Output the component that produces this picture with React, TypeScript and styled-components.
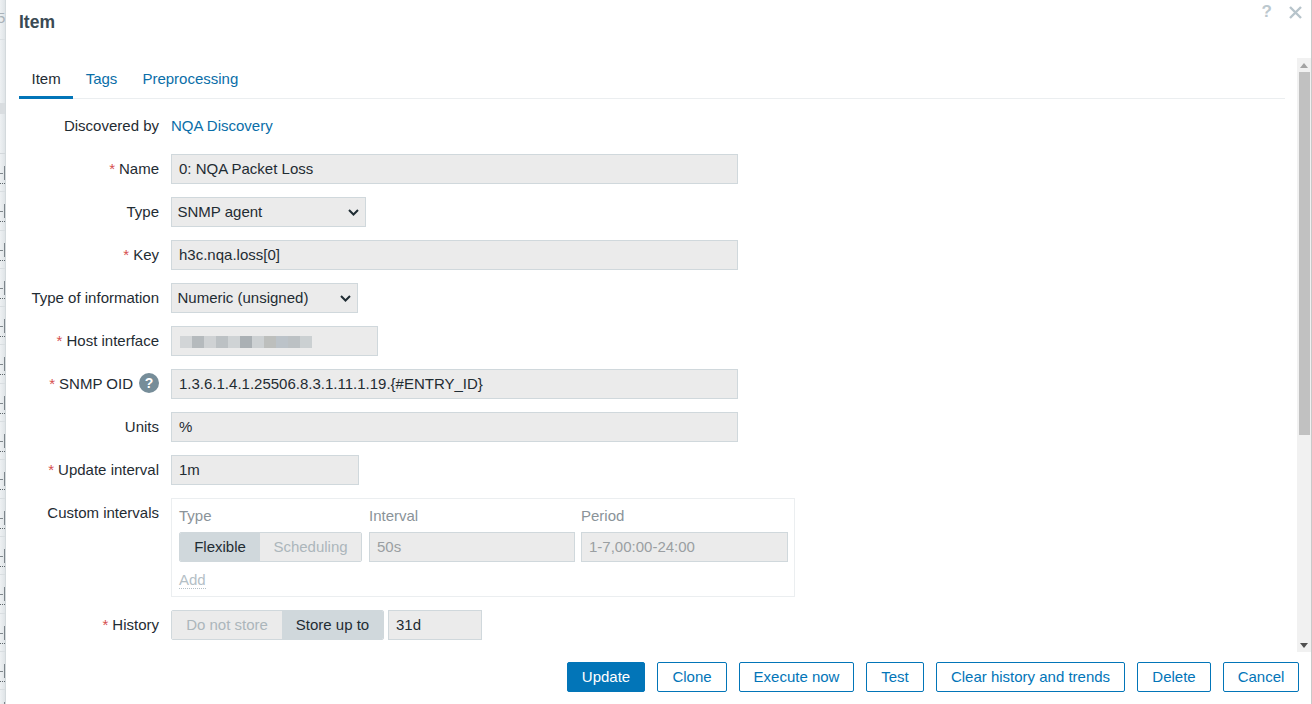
import React from "react";
import styled, { createGlobalStyle } from "styled-components";

const GlobalStyle = createGlobalStyle`
  html, body {
    margin: 0;
    padding: 0;
    height: 100%;
    overflow: hidden;
    background: #fff;
  }
  * { box-sizing: border-box; }
`;

const Page = styled.div`
  display: flex;
  width: 1312px;
  height: 704px;
  font-family: "Liberation Sans", Arial, sans-serif;
  font-size: 15px;
  color: #1f2c33;
  overflow: hidden;
`;

/* the hosts table that peeks out to the left of the dialog */
const Behind = styled.div`
  width: 6px;
  flex: none;
  display: flex;
  flex-direction: column;
  overflow: hidden;
  background: linear-gradient(to right, #eef1f3, #dfe4e7);
  border-right: 1px solid #d3d9dc;
`;

const BehindHead = styled.div`
  height: 40px;
  flex: none;
  padding-top: 9px;
  border-bottom: 1px solid #dbe0e3;
  color: #a9b2b8;
  line-height: 18px;
  text-indent: -3px;
`;

const BehindGap = styled.div`
  height: 63px;
  flex: none;
`;

const BehindBand = styled.div`
  height: 11px;
  flex: none;
  background: #d9dde0;
`;

const BehindRest = styled.div`
  height: 40px;
  flex: none;
  border-bottom: 1px solid #d3d8db;
`;

const BehindRow = styled.div`
  height: 38.3px;
  flex: none;
  position: relative;
  border-bottom: 1px solid #d9dee1;
`;

const RowDash = styled.span`
  position: absolute;
  left: 0;
  top: 19px;
  width: 3px;
  height: 1px;
  background: #7f878c;
`;

const RowBar = styled.span`
  position: absolute;
  left: 4px;
  top: 12px;
  width: 1px;
  height: 14px;
  background: #7d858b;
`;

const RowDots = styled.span`
  position: absolute;
  left: 0;
  right: 0;
  top: 29px;
  border-bottom: 1px dotted #5d666b;
`;

const Dialog = styled.div`
  flex: 1;
  min-width: 0;
  display: flex;
  flex-direction: column;
  background: #fff;
  border-right: 1px solid #c9c9c9;
`;

const Header = styled.div`
  height: 58px;
  flex: none;
  display: flex;
  justify-content: space-between;
  padding: 12px 9px 0 13px;
`;

const Title = styled.h4`
  margin: 0;
  font-size: 17.5px;
  line-height: 20px;
  font-weight: bold;
  color: #3a4a54;
`;

const HeaderIcons = styled.div`
  display: flex;
  gap: 17px;
  margin-top: -11px;
  height: 22px;
  align-items: center;
`;

const HelpMark = styled.span`
  font-size: 17px;
  font-weight: bold;
  color: #bcc8ce;
`;

const Body = styled.div`
  flex: 1;
  min-height: 0;
  display: flex;
`;

const Content = styled.div`
  flex: 1;
  min-width: 0;
  padding: 0 12px 0 13px;
`;

const Tabs = styled.div`
  display: flex;
  height: 41px;
  border-bottom: 1px solid #ebeef0;
`;

const Tab = styled.a<{ $active?: boolean }>`
  display: block;
  padding: 12px 12.5px 0;
  color: ${(p) => (p.$active ? "#1f2c33" : "#0a6ea8")};
  box-shadow: ${(p) => (p.$active ? "inset 0 -3px 0 #0275b8" : "none")};
  height: 41px;
`;

const Form = styled.div`
  display: flex;
  flex-direction: column;
  gap: 13px;
  padding-top: 12px;
`;

const Row = styled.div`
  display: grid;
  grid-template-columns: 140px 1fr;
  column-gap: 12px;
  align-items: center;
  min-height: 30px;
`;

const TopRow = styled(Row)`
  align-items: start;
`;

const Label = styled.label`
  display: flex;
  justify-content: flex-end;
  align-items: center;
  white-space: nowrap;
  padding-bottom: 2px;
`;

const TopLabel = styled(Label)`
  padding-top: 6px;
  padding-bottom: 0;
`;

const Star = styled.span`
  color: #d64e4e;
  margin-right: 4px;
`;

const HelpBadge = styled.span`
  width: 20px;
  height: 20px;
  margin-left: 6px;
  border-radius: 50%;
  background: #768d99;
  color: #fff;
  font-size: 14px;
  font-weight: bold;
  display: flex;
  align-items: center;
  justify-content: center;
`;

const LinkText = styled.a`
  display: block;
  padding-bottom: 2px;
  color: #0a6ea8;
`;

const Input = styled.div<{ $width: number; $muted?: boolean }>`
  width: ${(p) => p.$width}px;
  height: 30px;
  padding: 0 7px;
  line-height: 28px;
  background: #ebebeb;
  border: 1px solid #d0d8dc;
  color: ${(p) => (p.$muted ? "#9a9fa2" : "#1f2c33")};
  white-space: nowrap;
  overflow: hidden;
`;

const Select = styled(Input)`
  display: flex;
  align-items: center;
  justify-content: space-between;
  padding: 0 6px 0 5.5px;
`;

const Blur = styled.div`
  display: flex;
  height: 12px;
  margin: 9px 0 0 1px;
  filter: blur(0.5px);
`;

const BlurCell = styled.span<{ $tone: string }>`
  width: 12px;
  height: 12px;
  background: ${(p) => p.$tone};
`;

const Segmented = styled.div`
  display: flex;
  height: 30px;
  border: 1px solid #d0d8dc;
  border-radius: 2px;
  overflow: hidden;
`;

const Segment = styled.div<{ $width: number; $on?: boolean }>`
  width: ${(p) => p.$width}px;
  text-align: center;
  line-height: 28px;
  background: ${(p) => (p.$on ? "#d0d8dc" : "#ebebeb")};
  color: ${(p) => (p.$on ? "#1f2c33" : "#acb6bb")};
`;

const IntervalBox = styled.div`
  width: 624px;
  height: 99px;
  border: 1px solid #ebeef0;
  padding: 7px 6px 0 7px;
`;

const IntervalGrid = styled.div`
  display: grid;
  grid-template-columns: 184px 206px 207px;
  column-gap: 6px;
  row-gap: 7px;
`;

const ColHead = styled.div`
  height: 19px;
  line-height: 19px;
  color: #8a9399;
`;

const TypeField = styled.div`
  width: 183px;
`;

const AddLink = styled.span`
  display: inline-block;
  margin-top: 9px;
  line-height: 17px;
  color: #b4c0c6;
  border-bottom: 1px dotted #b4c0c6;
`;

const HistoryField = styled.div`
  display: flex;
  gap: 4px;
`;

const Scrollbar = styled.div`
  width: 14px;
  flex: none;
  display: flex;
  flex-direction: column;
  background: #f1f1f1;
`;

const ScrollArrow = styled.div`
  height: 14px;
  display: flex;
  align-items: center;
  justify-content: center;
`;

const ScrollThumb = styled.div`
  height: 363px;
  margin: 0 1px 0 2px;
  background: #c1c1c1;
`;

const ScrollTrack = styled.div`
  flex: 1;
`;

const Footer = styled.div`
  height: 52px;
  flex: none;
  display: flex;
  justify-content: flex-end;
  gap: 12px;
  padding: 10px 12px 0 0;
`;

const Button = styled.div<{ $primary?: boolean; $width: number }>`
  width: ${(p) => p.$width}px;
  height: 30px;
  border-radius: 2px;
  border: 1px solid #0275b8;
  text-align: center;
  line-height: 28px;
  background: ${(p) => (p.$primary ? "#0275b8" : "#fff")};
  color: ${(p) => (p.$primary ? "#fff" : "#0275b8")};
`;

const blurTones = ["#d2d5d7", "#b5babd", "#cfd2d4", "#bcc1c4", "#cfd3d5", "#aab0b4", "#cdd1d3", "#bdbfbd", "#bcc3c9", "#bcc1c4", "#cbd0d2"];
const footerButtons: [string, number][] = [["Clone", 70], ["Execute now", 115], ["Test", 58], ["Clear history and trends", 189], ["Delete", 74], ["Cancel", 76]];
const behindRows = Array.from({ length: 15 }, (_, i) => i);

function Chevron() {
  return (
    <svg width="11" height="7" viewBox="0 0 11 7" fill="none" stroke="#1f2c33" strokeWidth="2">
      <path d="M1 1l4.5 4.5L10 1" />
    </svg>
  );
}

export default function App() {
  return (
    <Page>
      <GlobalStyle />
      <Behind>
        <BehindHead>5</BehindHead>
        <BehindGap />
        <BehindBand />
        <BehindRest />
        {behindRows.map((i) => (
          <BehindRow key={i}>
            <RowDash />
            <RowBar />
            <RowDots />
          </BehindRow>
        ))}
      </Behind>
      <Dialog>
        <Header>
          <Title>Item</Title>
          <HeaderIcons>
            <HelpMark>?</HelpMark>
            <svg width="13" height="13" viewBox="0 0 13 13" fill="none" stroke="#b7c4cb" strokeWidth="2.4">
              <path d="M1 1l11 11M12 1L1 12" />
            </svg>
          </HeaderIcons>
        </Header>
        <Body>
          <Content>
            <Tabs>
              <Tab $active>Item</Tab>
              <Tab>Tags</Tab>
              <Tab>Preprocessing</Tab>
            </Tabs>
            <Form>
              <Row>
                <Label>Discovered by</Label>
                <div><LinkText>NQA Discovery</LinkText></div>
              </Row>
              <Row>
                <Label><Star>*</Star>Name</Label>
                <Input $width={567}>0: NQA Packet Loss</Input>
              </Row>
              <Row>
                <Label>Type</Label>
                <Select $width={195}>SNMP agent<Chevron /></Select>
              </Row>
              <Row>
                <Label><Star>*</Star>Key</Label>
                <Input $width={567}>h3c.nqa.loss[0]</Input>
              </Row>
              <Row>
                <Label>Type of information</Label>
                <Select $width={187}>Numeric (unsigned)<Chevron /></Select>
              </Row>
              <Row>
                <Label><Star>*</Star>Host interface</Label>
                <Input $width={207}>
                  <Blur>
                    {blurTones.map((tone, i) => (
                      <BlurCell key={i} $tone={tone} />
                    ))}
                  </Blur>
                </Input>
              </Row>
              <Row>
                <Label><Star>*</Star>SNMP OID<HelpBadge>?</HelpBadge></Label>
                <Input $width={567}>1.3.6.1.4.1.25506.8.3.1.11.1.19.{"{#ENTRY_ID}"}</Input>
              </Row>
              <Row>
                <Label>Units</Label>
                <Input $width={567}>%</Input>
              </Row>
              <Row>
                <Label><Star>*</Star>Update interval</Label>
                <Input $width={188}>1m</Input>
              </Row>
              <TopRow>
                <TopLabel>Custom intervals</TopLabel>
                <IntervalBox>
                  <IntervalGrid>
                    <ColHead>Type</ColHead>
                    <ColHead>Interval</ColHead>
                    <ColHead>Period</ColHead>
                    <TypeField>
                      <Segmented>
                        <Segment $width={80} $on>Flexible</Segment>
                        <Segment $width={101}>Scheduling</Segment>
                      </Segmented>
                    </TypeField>
                    <Input $width={206} $muted>50s</Input>
                    <Input $width={207} $muted>1-7,00:00-24:00</Input>
                  </IntervalGrid>
                  <AddLink>Add</AddLink>
                </IntervalBox>
              </TopRow>
              <Row>
                <Label><Star>*</Star>History</Label>
                <HistoryField>
                  <Segmented>
                    <Segment $width={110}>Do not store</Segment>
                    <Segment $width={101} $on>Store up to</Segment>
                  </Segmented>
                  <Input $width={94}>31d</Input>
                </HistoryField>
              </Row>
            </Form>
          </Content>
          <Scrollbar>
            <ScrollArrow>
              <svg width="8" height="5" viewBox="0 0 8 5"><path d="M4 0l4 5H0z" fill="#a3a3a3" /></svg>
            </ScrollArrow>
            <ScrollThumb />
            <ScrollTrack />
            <ScrollArrow>
              <svg width="8" height="5" viewBox="0 0 8 5"><path d="M0 0h8L4 5z" fill="#505050" /></svg>
            </ScrollArrow>
          </Scrollbar>
        </Body>
        <Footer>
          <Button $primary $width={78}>Update</Button>
          {footerButtons.map(([text, width]) => (
            <Button key={text} $width={width}>{text}</Button>
          ))}
        </Footer>
      </Dialog>
    </Page>
  );
}
